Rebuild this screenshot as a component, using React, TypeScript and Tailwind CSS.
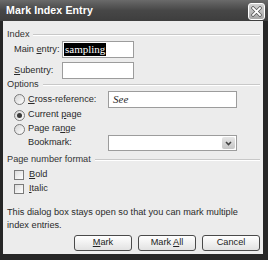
const ui = { fontFamily: '"Liberation Sans", Arial, sans-serif' }
const serif = { fontFamily: '"Liberation Serif", "Times New Roman", serif' }

const Radio = ({ checked }: { checked?: boolean }) => (
  <span className="w-[11px] h-[11px] rounded-full border border-[#7a7a7a] bg-gradient-to-br from-[#d4d4d4] to-white flex items-center justify-center shrink-0">
    {checked && <span className="w-[5px] h-[5px] rounded-full bg-[#3a3a3a]" />}
  </span>
)

const Check = () => (
  <span className="w-[10px] h-[10px] border border-[#7a7a7a] bg-gradient-to-br from-[#dcdcdc] to-white shrink-0" />
)

const Group = ({ title, top }: { title: string; top: string }) => (
  <div className={`flex items-center gap-[4px] pl-[4px] pr-[3px] h-[10px] ${top}`}>
    <span className="text-[#333] leading-none">{title}</span>
    <span className="flex-1 h-[2px] border-t border-[#c8c8c8] border-b-white border-b" />
  </div>
)

const Btn = ({ children }: { children: React.ReactNode }) => (
  <button className="w-[58px] h-[16px] rounded-[3px] border border-[#4a4a4a] bg-gradient-to-b from-white to-[#e2e2e2] text-[#222] leading-none">
    {children}
  </button>
)

export default function App() {
  return (
    <div className="w-[268px] h-[260px] bg-[#262626] flex flex-col text-[9.2px]" style={ui}>
      <div className="h-[21px] shrink-0 bg-gradient-to-b from-[#6a6a6a] via-[#474747] to-[#3e3e3e] flex items-center justify-between pl-[6px] pr-[3px]">
        <span className="text-white font-bold text-[10.6px] tracking-[0.1px]">Mark Index Entry</span>
        <span className="w-[17px] h-[17px] mt-[2px] rounded-[3px] border border-white bg-gradient-to-b from-[#d2d2d2] to-[#a8a8a8] flex items-center justify-center">
          <svg width="11" height="11" viewBox="0 0 11 11">
            <path d="M2 2 L9 9 M9 2 L2 9" stroke="#555" strokeWidth="3.2" strokeLinecap="square" />
            <path d="M2 2 L9 9 M9 2 L2 9" stroke="white" strokeWidth="1.8" strokeLinecap="square" />
          </svg>
        </span>
      </div>
      <div className="flex-1 ml-[3px] mr-[5px] mb-[6px] bg-[#ececec] flex flex-col text-[#2a2a2a]">
        <Group title="Index" top="mt-[9px]" />
        <div className="flex items-center h-[17px] mt-[1px] pl-[11px]">
          <span className="w-[48px]">Main <u>e</u>ntry:</span>
          <span className="w-[72px] h-[17px] border border-[#9c9c9c] bg-white flex items-center px-[1px]">
            <span className="bg-black text-white text-[11px] leading-[13px] px-[1px]" style={serif}>sampling</span>
          </span>
        </div>
        <div className="flex items-center h-[17px] mt-[4px] pl-[11px]">
          <span className="w-[48px]"><u>S</u>ubentry:</span>
          <span className="w-[72px] h-[17px] border border-[#9c9c9c] bg-white" />
        </div>
        <Group title="Options" top="mt-[1px]" />
        <div className="flex items-center h-[17px] mt-[1px] pl-[11px]">
          <Radio />
          <span className="ml-[3px] w-[80px]"><u>C</u>ross-reference:</span>
          <span className="w-[129px] h-[17px] border border-[#9c9c9c] bg-white flex items-center pl-[4px]">
            <span className="italic text-[11px]" style={serif}>See</span>
          </span>
        </div>
        <div className="flex items-center h-[12px] mt-[1px] pl-[11px]">
          <Radio checked />
          <span className="ml-[3px]">Current <u>p</u>age</span>
        </div>
        <div className="flex items-center h-[12px] mt-[2px] pl-[11px]">
          <Radio />
          <span className="ml-[3px]">Page ra<u>n</u>ge</span>
        </div>
        <div className="flex items-center h-[16px] pl-[25px]">
          <span className="w-[80px]">Bookmark:</span>
          <span className="w-[129px] h-[16px] border border-[#9c9c9c] bg-white flex justify-end p-[1px]">
            <span className="w-[13px] h-full rounded-[2px] bg-gradient-to-b from-[#e6e6e6] to-[#c6c6c6] flex items-center justify-center">
              <svg width="7" height="5" viewBox="0 0 7 5">
                <path d="M1 1 L3.5 3.5 L6 1" stroke="#444" strokeWidth="1.6" fill="none" />
              </svg>
            </span>
          </span>
        </div>
        <Group title="Page number format" top="mt-[4px]" />
        <div className="flex items-center h-[10px] mt-[5px] pl-[11px]">
          <Check />
          <span className="ml-[5px]"><u>B</u>old</span>
        </div>
        <div className="flex items-center h-[10px] mt-[4px] pl-[11px]">
          <Check />
          <span className="ml-[5px]"><u>I</u>talic</span>
        </div>
        <p className="mt-[12px] pl-[4px] leading-[13px]">
          This dialog box stays open so that you can mark multiple<br />index entries.
        </p>
        <div className="flex justify-end gap-[6px] pr-[3px] mt-[3px]">
          <Btn><u>M</u>ark</Btn>
          <Btn>Mark <u>A</u>ll</Btn>
          <Btn>Cancel</Btn>
        </div>
      </div>
    </div>
  )
}
